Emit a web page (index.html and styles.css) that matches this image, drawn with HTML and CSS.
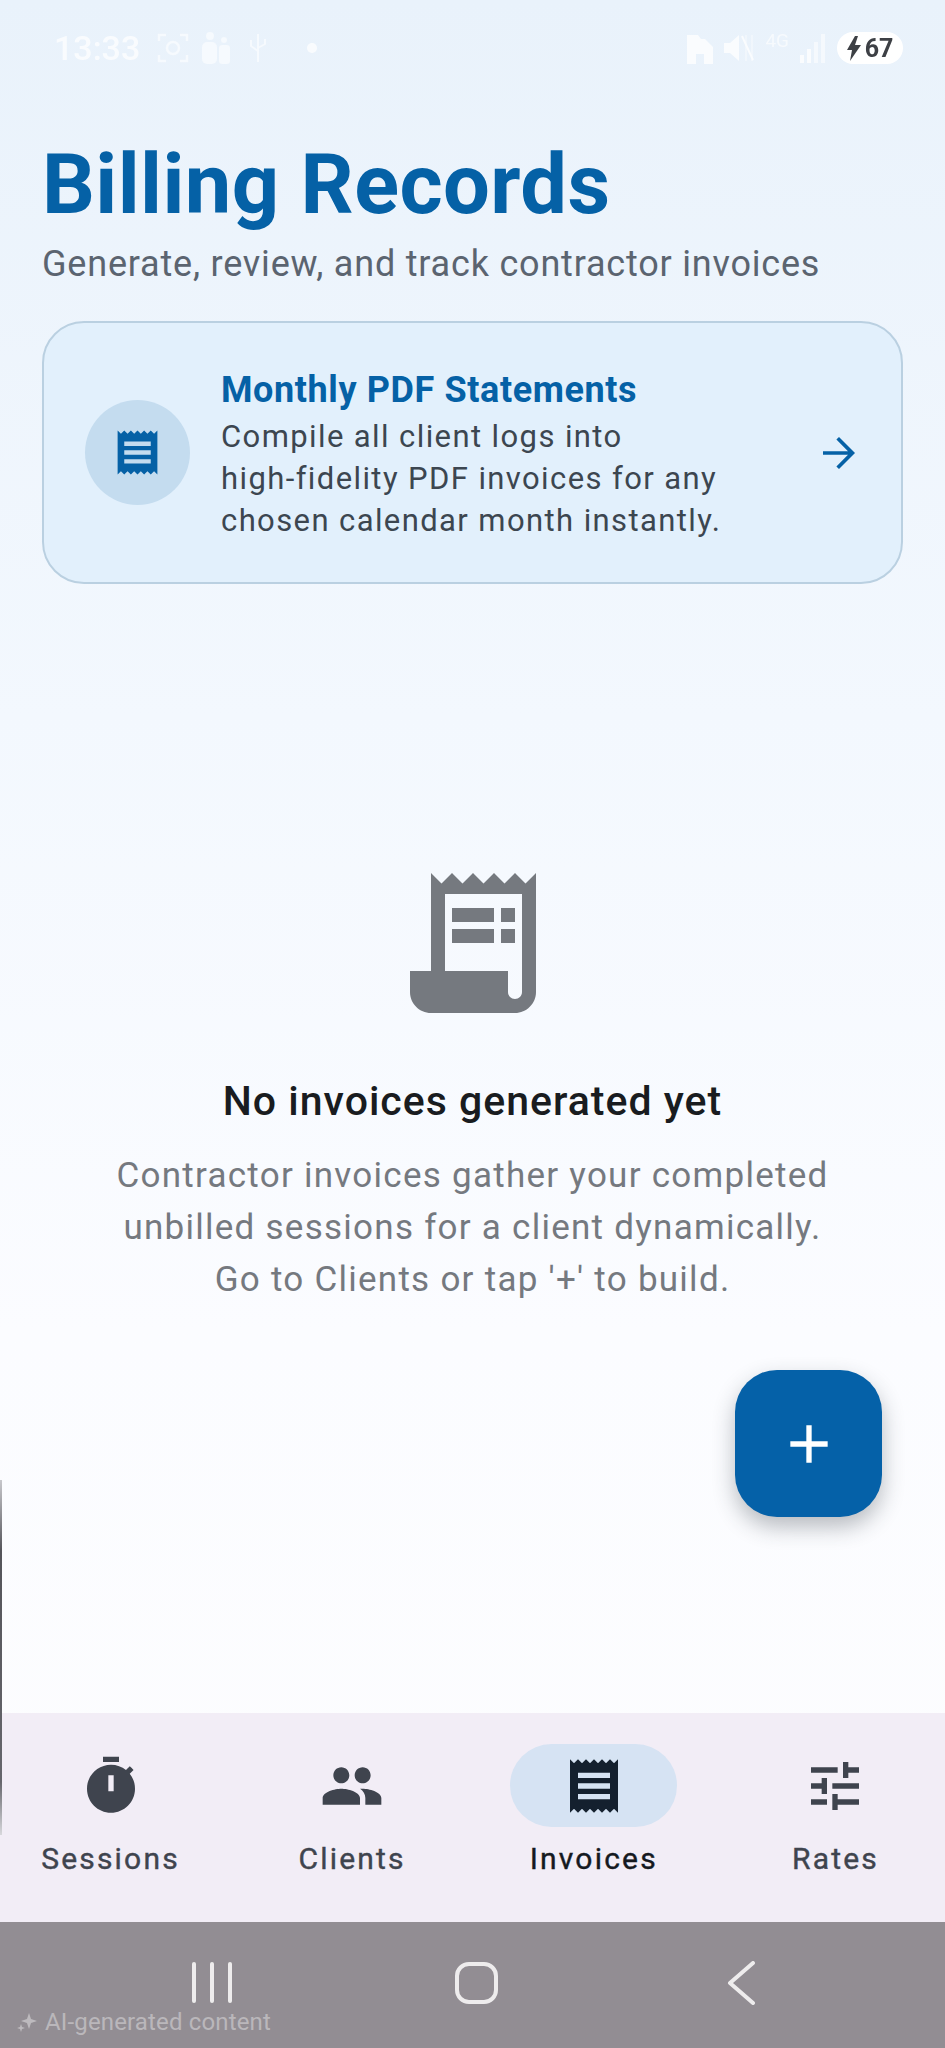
FILE: index.html
```html
<!DOCTYPE html>
<html>

<head>
	<meta charset="UTF-8">
	<title>Billing Records</title>
	<meta name="viewport" content="width=device-width, initial-scale=1.0">
	<link rel="stylesheet" href="styles.css">
</head>

<body>
	<div class="page">
		<div class="status-bar">
			<div class="status-left">
				<span class="status-time">13:33</span>
				<svg class="status-icon" width="32" height="32" viewBox="0 0 32 32" fill="none" stroke="#fff" stroke-width="2.5">
					<path d="M2 9V3h7M23 3h7v6M30 23v6h-7M9 29H2v-6" />
					<circle cx="16" cy="16" r="6" />
				</svg>
				<svg class="status-icon" width="30" height="32" viewBox="0 0 30 32" fill="#fff">
					<circle cx="9" cy="4" r="4" />
					<rect x="1" y="10" width="15" height="22" rx="5" />
					<circle cx="23" cy="8" r="3" />
					<rect x="18" y="13" width="11" height="19" rx="3" />
				</svg>
				<svg class="status-icon status-usb" width="18" height="30" viewBox="0 0 18 30" fill="none" stroke="#fff" stroke-width="2">
					<path d="M9 1v28M2 7v6l7 5M16 6v5l-7 4" />
				</svg>
				<span class="status-dot"></span>
			</div>
			<div class="status-right">
				<svg class="status-icon" width="26" height="32" viewBox="0 0 26 32" fill="#fff">
					<path d="M0 3h11l3 4h4l8 8v17H17V22H9v10H0z" />
				</svg>
				<svg class="status-icon" width="30" height="32" viewBox="0 0 30 32" fill="#fff">
					<path d="M0 11h6l9-8v26l-9-8H0z" />
					<path d="M18 4l11 24" stroke="#fff" stroke-width="2" />
					<path d="M22 3v26M28 3v26" stroke="#fff" stroke-width="1.5" opacity=".6" />
				</svg>
				<span class="status-net">4G</span>
				<svg class="status-icon" width="26" height="30" viewBox="0 0 26 30" fill="#fff">
					<rect x="0" y="22" width="4" height="8" />
					<rect x="7" y="16" width="4" height="14" />
					<rect x="14" y="9" width="4" height="21" opacity=".7" />
					<rect x="21" y="1" width="4" height="29" opacity=".7" />
				</svg>
				<span class="battery">
					<svg width="14" height="25" viewBox="0 0 14 25" fill="#3d4045">
						<path d="M8 0L0 14h5l-2 11L14 9H8l3-9z" />
					</svg>
					67
				</span>
			</div>
		</div>

		<main class="content">
			<h1 class="page-title">Billing Records</h1>
			<p class="page-subtitle">Generate, review, and track contractor invoices</p>

			<div class="promo-card">
				<div class="promo-badge">
					<svg width="53" height="53" viewBox="0 0 24 24">
						<path fill-rule="evenodd" d="M18 17H6v-2h12v2zm0-4H6v-2h12v2zm0-4H6V7h12v2zM3 22l1.5-1.5L6 22l1.5-1.5L9 22l1.5-1.5L12 22l1.5-1.5L15 22l1.5-1.5L18 22l1.5-1.5L21 22V2l-1.5 1.5L18 2l-1.5 1.5L15 2l-1.5 1.5L12 2l-1.5 1.5L9 2 7.5 3.5 6 2 4.5 3.5 3 2v20z" />
					</svg>
				</div>
				<div class="promo-text">
					<div class="promo-title">Monthly PDF Statements</div>
					<div class="promo-body">Compile all client logs into<br>high-fidelity PDF invoices for any<br>chosen calendar month instantly.</div>
				</div>
				<svg class="promo-arrow" width="48" height="48" viewBox="0 0 24 24">
					<path d="M12 4l-1.3 1.3 5.8 5.8H4v1.8h12.5l-5.8 5.8L12 20l8-8z" />
				</svg>
			</div>

			<div class="empty">
				<svg class="empty-icon" width="168" height="168" viewBox="0 0 24 24">
					<path fill-rule="evenodd" d="M19.5 3.5L18 2l-1.5 1.5L15 2l-1.5 1.5L12 2l-1.5 1.5L9 2 7.5 3.5 6 2v14H3v3c0 1.66 1.34 3 3 3h12c1.66 0 3-1.34 3-3V2l-1.5 1.5zM19 19c0 .55-.45 1-1 1s-1-.45-1-1v-3H8V5h11v14z" />
					<path d="M9 7h6v2H9zM16 7h2v2h-2zM9 10h6v2H9zM16 10h2v2h-2z" />
				</svg>
				<div class="empty-title">No invoices generated yet</div>
				<div class="empty-body">Contractor invoices gather your completed<br>unbilled sessions for a client dynamically.<br>Go to Clients or tap '+' to build.</div>
			</div>

			<button class="fab">
				<svg width="64" height="64" viewBox="0 0 24 24" fill="#fff">
					<path d="M19 13h-6v6h-2v-6H5v-2h6V5h2v6h6v2z" />
				</svg>
			</button>
		</main>

		<nav class="tabs">
			<div class="tab">
				<div class="tab-icon">
					<svg width="64" height="64" viewBox="0 0 24 24">
						<path fill-rule="evenodd" d="M15 1H9v2h6V1zm-4 13h2V8h-2v6zm8.03-6.61l1.42-1.42c-.43-.51-.9-.99-1.41-1.41l-1.42 1.42C16.07 4.74 14.12 4 12 4c-4.97 0-9 4.03-9 9s4.02 9 9 9 9-4.03 9-9c0-2.12-.74-4.07-1.97-5.61z" />
					</svg>
				</div>
				<div class="tab-label">Sessions</div>
			</div>
			<div class="tab">
				<div class="tab-icon">
					<svg width="64" height="64" viewBox="0 0 24 24">
						<path d="M16 11c1.66 0 2.99-1.34 2.99-3S17.66 5 16 5c-1.66 0-3 1.34-3 3s1.34 3 3 3zm-8 0c1.66 0 2.99-1.34 2.99-3S9.66 5 8 5C6.34 5 5 6.34 5 8s1.34 3 3 3zm0 2c-2.33 0-7 1.17-7 3.5V19h14v-2.5c0-2.33-4.67-3.5-7-3.5zm8 0c-.29 0-.62.02-.97.05 1.16.84 1.97 1.97 1.97 3.45V19h6v-2.5c0-2.33-4.67-3.5-7-3.5z" />
					</svg>
				</div>
				<div class="tab-label">Clients</div>
			</div>
			<div class="tab active">
				<div class="tab-icon">
					<svg width="64" height="64" viewBox="0 0 24 24">
						<path fill-rule="evenodd" d="M18 17H6v-2h12v2zm0-4H6v-2h12v2zm0-4H6V7h12v2zM3 22l1.5-1.5L6 22l1.5-1.5L9 22l1.5-1.5L12 22l1.5-1.5L15 22l1.5-1.5L18 22l1.5-1.5L21 22V2l-1.5 1.5L18 2l-1.5 1.5L15 2l-1.5 1.5L12 2l-1.5 1.5L9 2 7.5 3.5 6 2 4.5 3.5 3 2v20z" />
					</svg>
				</div>
				<div class="tab-label">Invoices</div>
			</div>
			<div class="tab">
				<div class="tab-icon">
					<svg width="64" height="64" viewBox="0 0 24 24">
						<path d="M3 17v2h6v-2H3zM3 5v2h10V5H3zm10 16v-2h8v-2h-8v-2h-2v6h2zM7 9v2H3v2h4v2h2V9H7zm14 4v-2H11v2h10zm-6-4h2V7h4V5h-4V3h-2v6z" />
					</svg>
				</div>
				<div class="tab-label">Rates</div>
			</div>
		</nav>

		<div class="system-bar">
			<svg class="sys-recents" width="42" height="42" viewBox="0 0 42 42" fill="#eeeced">
				<rect x="0" y="0" width="4" height="41" rx="2" />
				<rect x="18" y="0" width="4" height="41" rx="2" />
				<rect x="36" y="0" width="4" height="41" rx="2" />
			</svg>
			<span class="sys-home"></span>
			<svg class="sys-back" width="28" height="44" viewBox="0 0 28 44" fill="none" stroke="#eeeced" stroke-width="4" stroke-linecap="round" stroke-linejoin="round">
				<path d="M26 2L3 22l23 20" />
			</svg>
			<div class="ai-note">
				<svg width="20" height="20" viewBox="0 0 20 20" fill="#fff" opacity=".4">
					<path d="M12 1l2 6 6 2-6 2-2 6-2-6-6-2 6-2zM4 12l1 3 3 1-3 1-1 3-1-3-3-1 3-1z" />
				</svg>
				AI-generated content
			</div>
		</div>

		<span class="edge-line"></span>
	</div>
</body>

</html>
```

FILE: styles.css
```css
* {
	box-sizing: border-box;
}

body {
	margin: 0;
	font-family: Roboto, "Noto Sans", sans-serif;
}

.page {
	position: relative;
	display: flex;
	flex-direction: column;
	width: 945px;
	height: 2048px;
	overflow: hidden;
	background: linear-gradient(180deg, #e9f2fb 0%, #f3f8fe 35%, #fbfcff 65%, #fdfdfe 100%);
}

/* status bar */
.status-bar {
	display: flex;
	justify-content: space-between;
	align-items: center;
	height: 96px;
	padding: 0 42px 0 54px;
	flex-shrink: 0;
}

.status-left,
.status-right {
	display: flex;
	align-items: center;
	filter: blur(0.6px);
}

.status-left {
	gap: 12px;
	opacity: 0.75;
}

.status-right {
	gap: 11px;
}

.status-time {
	font-size: 34px;
	font-weight: 500;
	color: #fff;
	margin-right: 5px;
}

.status-icon {
	opacity: 0.75;
}

.status-usb {
	margin-left: 6px;
}

.status-dot {
	width: 10px;
	height: 10px;
	margin-left: 28px;
	border-radius: 50%;
	background: #fff;
}

.status-net {
	font-size: 19px;
	color: #fff;
	opacity: 0.6;
	align-self: flex-start;
	margin-top: -3px;
}

.battery {
	display: flex;
	align-items: center;
	justify-content: center;
	gap: 4px;
	width: 66px;
	height: 32px;
	border-radius: 16px;
	background: #fff;
	color: #3d4045;
	font-size: 25px;
	font-weight: 700;
}

/* main area */
.content {
	position: relative;
	flex: 1;
	padding: 43px 42px 0;
}

.page-title {
	margin: 0;
	font-size: 83px;
	line-height: 92px;
	font-weight: 700;
	letter-spacing: 0.4px;
	color: #0561a6;
}

.page-subtitle {
	margin: 9px 0 0;
	font-size: 36px;
	line-height: 48px;
	letter-spacing: 0.8px;
	color: #5b6470;
}

.promo-card {
	display: flex;
	align-items: center;
	height: 263px;
	margin-top: 33px;
	padding: 0 38px 0 41px;
	border: 2px solid #bad0e1;
	border-radius: 42px;
	background: #e2f0fc;
}

.promo-badge {
	display: flex;
	align-items: center;
	justify-content: center;
	width: 105px;
	height: 105px;
	flex-shrink: 0;
	border-radius: 50%;
	background: #c4dcef;
}

.promo-badge svg {
	fill: #0561a6;
}

.promo-text {
	flex: 1;
	margin-left: 31px;
	padding-top: 5px;
}

.promo-title {
	font-size: 36px;
	line-height: 44px;
	font-weight: 700;
	letter-spacing: 0.6px;
	color: #0561a6;
}

.promo-body {
	margin-top: 4px;
	font-size: 31px;
	line-height: 42px;
	letter-spacing: 1.4px;
	color: #3c4650;
}

.promo-arrow {
	fill: #0561a6;
	flex-shrink: 0;
}

/* empty state */
.empty {
	display: flex;
	flex-direction: column;
	align-items: center;
	margin-top: 275px;
	text-align: center;
}

.empty-icon {
	fill: #75797f;
}

.empty-title {
	margin-top: 48px;
	font-size: 41px;
	line-height: 52px;
	font-weight: 500;
	letter-spacing: 1px;
	color: #191c20;
}

.empty-body {
	margin-top: 23px;
	font-size: 35px;
	line-height: 52px;
	letter-spacing: 1.26px;
	color: #75797f;
}

.fab {
	position: absolute;
	left: 735px;
	top: 1274px;
	display: flex;
	align-items: center;
	justify-content: center;
	width: 147px;
	height: 147px;
	padding: 0;
	border: none;
	border-radius: 42px;
	background: #0561a8;
	box-shadow: 0 10px 22px rgba(40, 50, 60, 0.32);
}

/* bottom tabs */
.tabs {
	display: flex;
	justify-content: space-between;
	height: 209px;
	padding: 31px 26px 0 27px;
	flex-shrink: 0;
	background: #f2edf6;
}

.tab {
	display: flex;
	flex-direction: column;
	align-items: center;
	width: 167px;
}

.tab-icon {
	display: flex;
	align-items: center;
	justify-content: center;
	width: 167px;
	height: 83px;
	border-radius: 42px;
}

.tab-icon svg {
	fill: #3f444e;
}

.tab-label {
	margin-top: 14px;
	font-size: 30px;
	line-height: 36px;
	font-weight: 400;
	letter-spacing: 2.2px;
	white-space: nowrap;
	color: #3f444e;
	-webkit-text-stroke: 0.4px currentColor;
}

.tab.active .tab-icon {
	background: #d6e3f3;
}

.tab.active .tab-icon svg {
	fill: #14202e;
}

.tab.active .tab-label {
	color: #15191f;
}

/* android nav */
.system-bar {
	position: relative;
	display: flex;
	height: 126px;
	flex-shrink: 0;
	background: #928d93;
}

.sys-recents {
	margin: 40px 0 0 192px;
}

.sys-home {
	width: 43px;
	height: 42px;
	margin: 40px 0 0 221px;
	border: 4px solid #eeeced;
	border-radius: 14px;
}

.sys-back {
	margin: 39px 0 0 229px;
}

.ai-note {
	position: absolute;
	left: 17px;
	top: 85px;
	display: flex;
	align-items: center;
	gap: 8px;
	font-size: 24px;
	line-height: 30px;
	letter-spacing: 0.15px;
	color: rgba(255, 255, 255, 0.38);
}

.edge-line {
	position: absolute;
	left: 0;
	top: 1480px;
	width: 2px;
	height: 355px;
	background: linear-gradient(180deg, #c8c8cc, #55555a 20%, #66666c 85%, #d8d8dc);
}
```
